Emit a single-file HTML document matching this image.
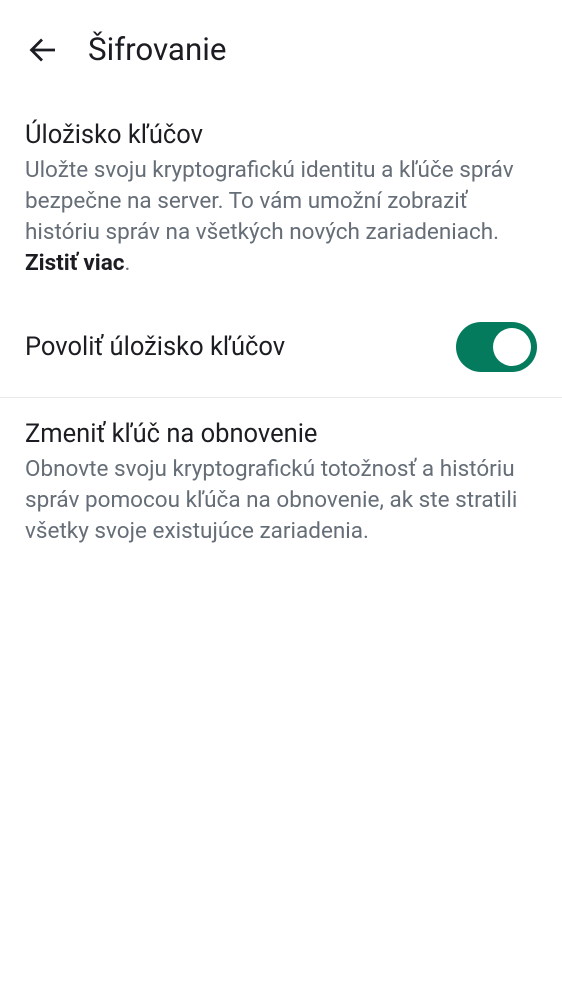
<!DOCTYPE html>
<html><head><meta charset="utf-8"><style>
body{margin:0;width:562px;height:1000px;background:#fff;font-family:"Roboto","Liberation Sans",sans-serif;position:relative;overflow:hidden}
.t{position:absolute;white-space:nowrap;left:25px}
.h{font-size:25.5px;line-height:30px;color:#1b1d22}
.b{font-size:22.5px;color:#656d77;line-height:31px}
</style></head><body>
<svg style="position:absolute;left:28px;top:36px" width="30" height="28" viewBox="0 0 30 28"><path d="M27 14H4M14 3.5L3.5 14L14 24.5" stroke="#1b1d22" stroke-width="2.8" fill="none"/></svg>
<div class="t" style="left:88px;top:32px;font-size:31.3px;line-height:36px;color:#1b1d22">Šifrovanie</div>
<div class="t h" style="top:120px">Úložisko kľúčov</div>
<div class="t b" style="top:155px">Uložte svoju kryptografickú identitu a kľúče správ<br>bezpečne na server. To vám umožní zobraziť<br>históriu správ na všetkých nových zariadeniach.<br><b style="color:#1b1d22">Zistiť viac</b>.</div>
<div class="t h" style="top:332px">Povoliť úložisko kľúčov</div>
<div style="position:absolute;left:456px;top:322px;width:81px;height:50px;border-radius:25px;background:#047b5d"></div>
<div style="position:absolute;left:493px;top:328px;width:38px;height:38px;border-radius:50%;background:#fff"></div>
<div style="position:absolute;left:0;top:397px;width:562px;height:1px;background:#e8eaec"></div>
<div class="t h" style="top:419px">Zmeniť kľúč na obnovenie</div>
<div class="t b" style="top:454px">Obnovte svoju kryptografickú totožnosť a históriu<br>správ pomocou kľúča na obnovenie, ak ste stratili<br>všetky svoje existujúce zariadenia.</div>
</body></html>
